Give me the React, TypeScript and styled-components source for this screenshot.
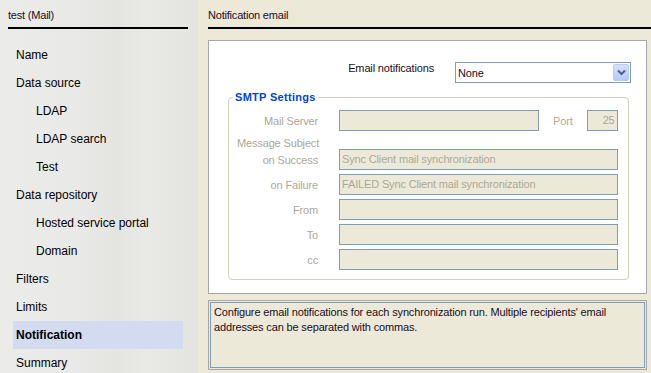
import { FC } from "react";
import styled, { createGlobalStyle } from "styled-components";

type NavItemType = {
  label: string;
  level: number;
  active?: boolean;
};

type FieldRowType = {
  label: string;
  value: string;
};

const GlobalStyle = createGlobalStyle`
  html, body {
    margin: 0;
    padding: 0;
  }

  body {
    font-family: "Liberation Sans", Arial, sans-serif;
    background-color: #ece9d8;
  }
`;

const Page = styled.div`
  display: flex;
  width: 651px;
  height: 373px;
  overflow: hidden;
`;

const Sidebar = styled.div`
  width: 198px;
  flex-shrink: 0;
  display: flex;
  flex-direction: column;
  background: linear-gradient(
    to right,
    #ebebe9 0%,
    #e9e9e7 40%,
    #e4e4e1 60%,
    #e9e9e6 75%,
    #e3e3e0 100%
  );
`;

const SidebarTitle = styled.div`
  margin-left: 8px;
  width: 180px;
  padding: 8px 0 5px;
  line-height: 14px;
  font-size: 11px;
  letter-spacing: -0.2px;
  color: #1a0d24;
  border-bottom: 2px solid #000;
`;

const NavList = styled.div`
  margin-top: 12px;
  display: flex;
  flex-direction: column;
`;

const NavEntry = styled.div<{ $level: number; $active?: boolean }>`
  margin-left: 13px;
  width: 170px;
  height: 28px;
  line-height: 28px;
  box-sizing: border-box;
  padding-left: ${({ $level }) => 3 + $level * 20}px;
  font-size: 12px;
  color: #000;
  font-weight: ${({ $active }) => ($active ? "bold" : "normal")};
  background-color: ${({ $active }) => ($active ? "#d2dbf0" : "transparent")};
`;

const Main = styled.div`
  flex: 1;
  display: flex;
  flex-direction: column;
  padding-left: 10px;
`;

const Header = styled.div`
  padding: 8px 0 5px;
  line-height: 14px;
  font-size: 11px;
  letter-spacing: -0.2px;
  color: #1a0d24;
  border-bottom: 2px solid #000;
`;

const FormPanel = styled.div`
  margin: 11px 4px 0 0;
  height: 254px;
  box-sizing: border-box;
  border: 1px solid #a7a6aa;
  background-color: #fff;
  padding: 21px 17px 0 19px;
`;

const SelectRow = styled.div`
  display: flex;
  justify-content: flex-end;
  align-items: flex-start;
  gap: 21px;
`;

const SelectLabel = styled.span`
  font-size: 11px;
  letter-spacing: -0.15px;
  line-height: 12px;
  color: #1a0d24;
`;

const Select = styled.div`
  width: 176px;
  height: 21px;
  box-sizing: border-box;
  border: 1px solid #7f9db9;
  display: flex;
  align-items: center;
  justify-content: space-between;
  padding: 0 1px 0 2px;
  font-size: 11px;
  letter-spacing: -0.15px;
  color: #1a0d24;
  margin-right: -2px;
`;

const DropButton = styled.div`
  width: 16px;
  height: 17px;
  box-sizing: border-box;
  border: 1px solid #b8cbf7;
  border-radius: 2px;
  background: linear-gradient(to bottom, #d4e0fd, #b6c9fb);
  display: flex;
  align-items: center;
  justify-content: center;
`;

const Fieldset = styled.fieldset`
  margin: 7px 0 0;
  padding: 0 10px 9px 0;
  border: 1px solid #d0d0bf;
  border-radius: 4px;
  min-inline-size: 0;
`;

const Legend = styled.legend`
  margin-left: 4px;
  padding: 0 2px;
  font-size: 11px;
  font-weight: bold;
  letter-spacing: 0.3px;
  line-height: 14px;
  color: #0046d5;
`;

const FieldRow = styled.div<{ $offset: number }>`
  display: grid;
  grid-template-columns: 89px 1fr;
  column-gap: 21px;
  align-items: center;
  margin-top: ${({ $offset }) => $offset}px;
`;

const FieldLabel = styled.span`
  text-align: right;
  font-size: 11px;
  letter-spacing: -0.15px;
  color: #aca899;
  white-space: nowrap;
`;

const SubjectLabel = styled.div`
  margin-top: 5px;
  padding-left: 8px;
  height: 14px;
  line-height: 14px;
  font-size: 11px;
  letter-spacing: -0.15px;
  color: #aca899;
`;

const Input = styled.div<{ $align?: "left" | "right" }>`
  height: 21px;
  box-sizing: border-box;
  border: 1px solid #7f9db9;
  background-color: #ece9d8;
  padding: 0 3px 0 2px;
  line-height: 19px;
  font-size: 11px;
  letter-spacing: -0.15px;
  color: #aca899;
  white-space: nowrap;
  overflow: hidden;
  text-align: ${({ $align }) => $align ?? "left"};
`;

const ServerLine = styled.div`
  display: flex;
  align-items: center;
`;

const ServerInput = styled(Input)`
  width: 200px;
`;

const PortLabel = styled.span`
  margin: 0 14px;
  font-size: 11px;
  letter-spacing: -0.15px;
  color: #aca899;
`;

const PortInput = styled(Input)`
  width: 31px;
  padding-right: 2px;
`;

const HelpBox = styled.div`
  margin: 6px 4px 0 0;
  height: 70px;
  box-sizing: border-box;
  border: 1px solid #a7a6aa;
  box-shadow: inset 0 0 0 1px #ece9d8, inset 0 0 0 2px #7f9db9;
  padding: 4px 10px 0 5px;
  font-size: 11px;
  letter-spacing: -0.15px;
  line-height: 15px;
  color: #1a0d24;
`;

const navItems: NavItemType[] = [
  { label: "Name", level: 0 },
  { label: "Data source", level: 0 },
  { label: "LDAP", level: 1 },
  { label: "LDAP search", level: 1 },
  { label: "Test", level: 1 },
  { label: "Data repository", level: 0 },
  { label: "Hosted service portal", level: 1 },
  { label: "Domain", level: 1 },
  { label: "Filters", level: 0 },
  { label: "Limits", level: 0 },
  { label: "Notification", level: 0, active: true },
  { label: "Summary", level: 0 },
];

const subjectRows: FieldRowType[] = [
  { label: "on Success", value: "Sync Client mail synchronization" },
  { label: "on Failure", value: "FAILED Sync Client mail synchronization" },
  { label: "From", value: "" },
  { label: "To", value: "" },
  { label: "cc", value: "" },
];

const Chevron: FC = () => (
  <svg width="9" height="7" viewBox="0 0 9 7">
    <path
      d="M1 1.5 L4.5 5 L8 1.5"
      fill="none"
      stroke="#4d6185"
      strokeWidth="2"
    />
  </svg>
);

function App() {
  return (
    <Page>
      <GlobalStyle />
      <Sidebar>
        <SidebarTitle>test (Mail)</SidebarTitle>
        <NavList>
          {navItems.map(({ label, level, active }) => (
            <NavEntry key={label} $level={level} $active={active}>
              {label}
            </NavEntry>
          ))}
        </NavList>
      </Sidebar>
      <Main>
        <Header>Notification email</Header>
        <FormPanel>
          <SelectRow>
            <SelectLabel>Email notifications</SelectLabel>
            <Select>
              <span>None</span>
              <DropButton>
                <Chevron />
              </DropButton>
            </Select>
          </SelectRow>
          <Fieldset>
            <Legend>SMTP Settings</Legend>
            <FieldRow $offset={6}>
              <FieldLabel>Mail Server</FieldLabel>
              <ServerLine>
                <ServerInput />
                <PortLabel>Port</PortLabel>
                <PortInput $align="right">25</PortInput>
              </ServerLine>
            </FieldRow>
            <SubjectLabel>Message Subject</SubjectLabel>
            {subjectRows.map(({ label, value }, i) => (
              <FieldRow key={label} $offset={i === 0 ? -1 : 4}>
                <FieldLabel>{label}</FieldLabel>
                <Input>{value}</Input>
              </FieldRow>
            ))}
          </Fieldset>
        </FormPanel>
        <HelpBox>
          Configure email notifications for each synchronization run. Multiple
          recipients' email addresses can be separated with commas.
        </HelpBox>
      </Main>
    </Page>
  );
}

export default App;
